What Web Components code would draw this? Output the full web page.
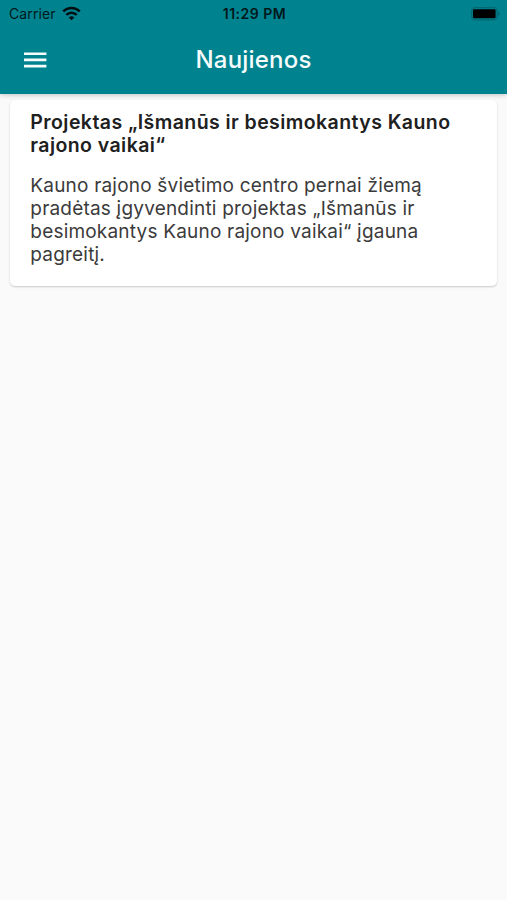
<!DOCTYPE html>
<html lang="lt">
<head>
<meta charset="utf-8">
<meta name="viewport" content="width=device-width, initial-scale=1">
<title>Naujienos</title>
<style>
    body {
        margin: 0;
        background: #fafafa;
        font-family: Inter, "Liberation Sans", sans-serif;
    }
</style>
</head>
<body>
<news-app>
    <status-bar slot="top" carrier="Carrier" time="11:29 PM"></status-bar>
    <app-bar slot="top">Naujienos</app-bar>
    <news-card>
        <span slot="title">Projektas „Išmanūs ir besimokantys Kauno rajono vaikai“</span>
        Kauno rajono švietimo centro pernai žiemą pradėtas įgyvendinti projektas „Išmanūs ir besimokantys Kauno rajono vaikai“ įgauna pagreitį.
    </news-card>
</news-app>

<script>
class NewsApp extends HTMLElement {
    constructor() {
        super();
        this.attachShadow({ mode: 'open' });
        this.shadowRoot.innerHTML = `
            <style>
                :host {
                    display: flex;
                    flex-direction: column;
                    min-height: 100vh;
                    --primary: #00838f;
                }

                header {
                    display: flex;
                    flex-direction: column;
                    height: 94px;
                    background: var(--primary);
                    box-shadow: 0 1px 5px rgba(0, 0, 0, 0.22);
                }

                main {
                    padding: 6px 10px;
                }
            </style>
            <header><slot name="top"></slot></header>
            <main><slot></slot></main>
        `;
    }
}

class StatusBar extends HTMLElement {
    constructor() {
        super();
        this.attachShadow({ mode: 'open' });
    }

    connectedCallback() {
        this.shadowRoot.innerHTML = `
            <style>
                :host {
                    display: grid;
                    grid-template-columns: 1fr auto 1fr;
                    align-items: center;
                    height: 27px;
                    padding: 0 7px 0 9px;
                    color: #00181b;
                    font-size: 14px;
                    line-height: 28px;
                }

                .left {
                    display: flex;
                    align-items: center;
                    gap: 6px;
                    letter-spacing: 0.1px;
                }

                .time {
                    font-size: 14px;
                    font-weight: 600;
                    letter-spacing: 0.5px;
                }

                svg {
                    display: block;
                }

                .left svg {
                    margin-bottom: 2px;
                }

                .battery {
                    justify-self: end;
                    margin-bottom: 1px;
                }
            </style>
            <div class="left">
                <span>${this.getAttribute('carrier')}</span>
                <svg width="19" height="15" viewBox="0 0 19 15" fill="none" stroke="#001012" stroke-width="2.6">
                    <path d="M1.2 5.4a11.8 11.8 0 0 1 16.6 0"/>
                    <path d="M4.3 8.9a7.4 7.4 0 0 1 10.4 0"/>
                    <path d="M9.5 14.3L6.7 11.5a4 4 0 0 1 5.6 0z" fill="#001012" stroke="none"/>
                </svg>
            </div>
            <span class="time">${this.getAttribute('time')}</span>
            <svg class="battery" width="29" height="14" viewBox="0 0 29 14">
                <rect x="0.7" y="0.7" width="25.4" height="12.2" rx="3.6" fill="none" stroke="#006973" stroke-width="1.3"/>
                <rect x="2" y="2.2" width="22.6" height="9" rx="1.2" fill="#000"/>
                <path d="M27.3 4.8c1.7.7 1.7 3.3 0 4z" fill="#005a63"/>
            </svg>
        `;
    }
}

class AppBar extends HTMLElement {
    constructor() {
        super();
        this.attachShadow({ mode: 'open' });
        this.shadowRoot.innerHTML = `
            <style>
                :host {
                    display: grid;
                    grid-template-columns: 1fr auto 1fr;
                    align-items: center;
                    flex: 1;
                    padding: 0 24px 2px;
                    color: #f6fcfc;
                }

                button {
                    justify-self: start;
                    padding: 0;
                    border: 0;
                    background: none;
                    color: inherit;
                }

                svg {
                    display: block;
                }

                h1 {
                    margin: 0;
                    font-size: 24px;
                    font-weight: 500;
                    line-height: 30px;
                    letter-spacing: 0.2px;
                }
            </style>
            <button aria-label="Meniu">
                <svg width="23" height="16" viewBox="0 0 23 16" fill="currentColor">
                    <path d="M0 0.4h22.4v2.6H0zM0 6.6h22.4v2.6H0zM0 12.8h22.4v2.6H0z"/>
                </svg>
            </button>
            <h1><slot></slot></h1>
        `;
    }
}

class NewsCard extends HTMLElement {
    constructor() {
        super();
        this.attachShadow({ mode: 'open' });
        this.shadowRoot.innerHTML = `
            <style>
                :host {
                    display: block;
                    box-sizing: border-box;
                    height: 185.5px;
                    padding: 11px 40px 20px 20.3px;
                    border-radius: 5px;
                    background: #fff;
                    box-shadow: 0 1px 2px rgba(0, 0, 0, 0.2);
                    line-height: 23.2px;
                }

                h2 {
                    margin: 0 0 16.2px;
                    color: #202020;
                    font-size: 19.5px;
                    font-weight: 600;
                    line-height: inherit;
                    letter-spacing: 0.43px;
                }

                p {
                    margin: 0;
                    color: #3b3b3b;
                    font-size: 19px;
                    letter-spacing: 0.2px;
                }
            </style>
            <h2><slot name="title"></slot></h2>
            <p><slot></slot></p>
        `;
    }
}

customElements.define('news-app', NewsApp);
customElements.define('status-bar', StatusBar);
customElements.define('app-bar', AppBar);
customElements.define('news-card', NewsCard);
</script>
</body>
</html>
